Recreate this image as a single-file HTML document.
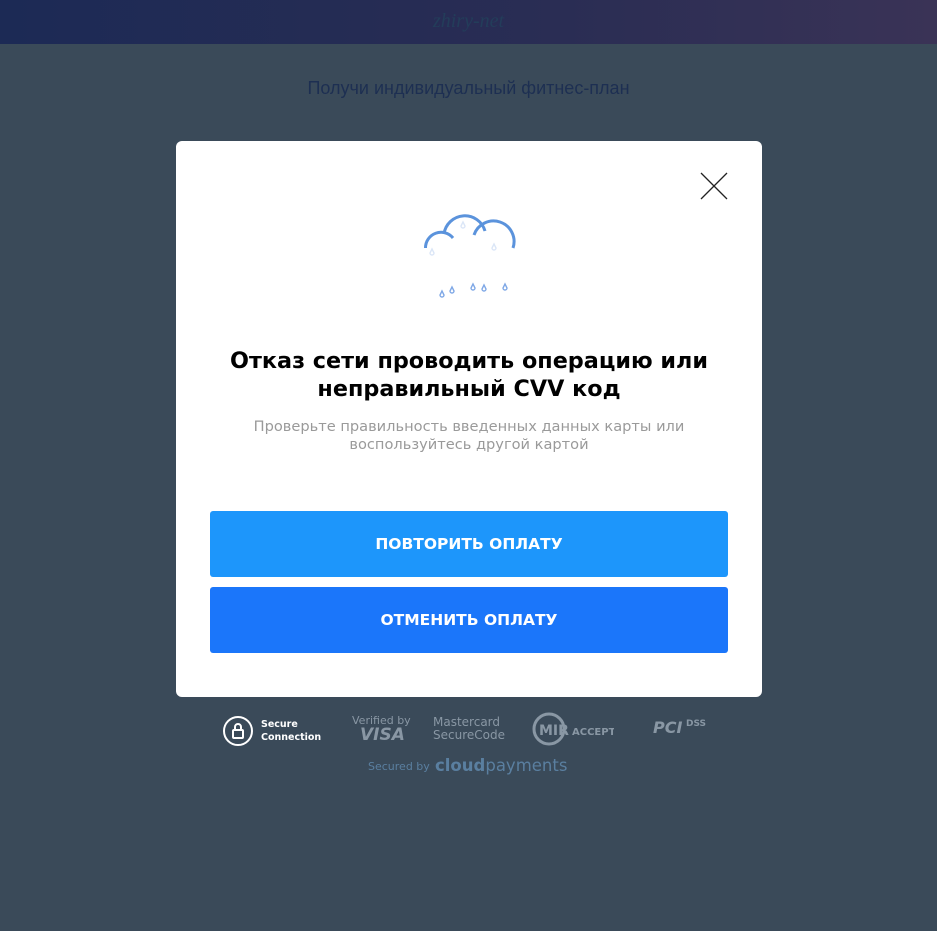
<!DOCTYPE html>
<html><head><meta charset="utf-8"><style>
*{margin:0;padding:0;box-sizing:border-box}
body{width:937px;height:931px;background:#3a4a59;font-family:"Liberation Sans",sans-serif;position:relative;overflow:hidden}
.hdr{position:absolute;left:0;top:0;width:937px;height:44px;background:linear-gradient(90deg,#1c2a55,#2a2d54 60%,#3a3356)}
.logo{position:absolute;left:0;width:937px;top:10px;text-align:center;color:#233d5a;font-family:"Liberation Serif",serif;font-style:italic;font-size:20px}
.sub{position:absolute;top:78px;width:937px;text-align:center;color:#1d2f52;font-size:18px}
.modal{position:absolute;left:176px;top:141px;width:586px;height:556px;background:#fff;border-radius:6px}
.t{position:absolute;top:206px;left:0;width:586px;text-align:center;font-family:"DejaVu Sans",sans-serif;font-weight:600;font-size:22.3px;line-height:28px;color:#000}
.d{position:absolute;top:277px;left:0;width:586px;text-align:center;font-family:"DejaVu Sans",sans-serif;font-size:14.6px;line-height:18px;color:#9a9a9a}
.b{position:absolute;left:34px;width:518px;height:66px;border-radius:3px;color:#fff;font-family:"DejaVu Sans",sans-serif;font-size:15.5px;font-weight:600;text-align:center;line-height:66px}
.foot{position:absolute;color:#8997a4;font-family:"DejaVu Sans",sans-serif}
</style></head><body>
<div class="hdr"><div class="logo">zhiry-net</div></div>
<div class="sub">Получи индивидуальный фитнес-план</div>
<div class="modal">
<svg style="position:absolute;left:524px;top:31px" width="28" height="28"><path d="M1 1L27 27M27 1L1 27" stroke="#222" stroke-width="1.3"/></svg>
</div>
<svg style="position:absolute;left:400px;top:200px" width="140" height="110" viewBox="0 0 140 110">
<g fill="none" stroke="#5b93dc" stroke-width="3">
<path d="M25.5 48A15.5 15.5 0 0 1 53 38"/>
<path d="M44 34A21 21 0 0 1 85 31"/>
<path d="M74 35A20 20 0 0 1 113 48"/>
</g>
<g fill="none" stroke="#7fa8e6" stroke-width="1.4">
<path d="M42 91l-2 4a2 2 0 0 0 4 0z"/><path d="M52 87l-2 4a2 2 0 0 0 4 0z"/><path d="M73 84l-2 4a2 2 0 0 0 4 0z"/><path d="M84 85l-2 4a2 2 0 0 0 4 0z"/><path d="M105 84l-2 4a2 2 0 0 0 4 0z"/></g>
<g fill="none" stroke="#dbe6f7" stroke-width="1.4"><path d="M32 49l-2 4a2 2 0 0 0 4 0z"/><path d="M63 22l-2 4a2 2 0 0 0 4 0z"/><path d="M94 44l-2 4a2 2 0 0 0 4 0z"/></g>
</svg>
<div class="modal" style="background:none">
<div class="t">Отказ сети проводить операцию или<br>неправильный CVV код</div>
<div class="d">Проверьте правильность введенных данных карты или<br>воспользуйтесь другой картой</div>
<div class="b" style="top:370px;background:#1d96fb">ПОВТОРИТЬ ОПЛАТУ</div>
<div class="b" style="top:446px;background:#1b76fa">ОТМЕНИТЬ ОПЛАТУ</div>
</div>
<svg style="position:absolute;left:222px;top:715px" width="32" height="32"><circle cx="16" cy="16" r="14" fill="none" stroke="#fff" stroke-width="2"/><rect x="11" y="15" width="10" height="8" rx="1" fill="none" stroke="#fff" stroke-width="2"/><path d="M13 15v-3a3 3 0 0 1 6 0v3" fill="none" stroke="#fff" stroke-width="2"/></svg>
<div class="foot" style="left:261px;top:718px;font-size:9.5px;line-height:13px;color:#fff;font-weight:bold">Secure<br>Connection</div>
<div class="foot" style="left:352px;top:714px;font-size:11px">Verified by</div>
<div class="foot" style="left:360px;top:725px;font-size:17px;font-weight:bold;font-style:italic">VISA</div>
<div class="foot" style="left:433px;top:716px;font-size:12px;line-height:13px">Mastercard<br>SecureCode</div>
<svg style="position:absolute;left:532px;top:712px" width="82" height="34"><circle cx="17" cy="17" r="15" fill="none" stroke="#8997a4" stroke-width="3"/><text x="7" y="23" font-family="DejaVu Sans" font-weight="bold" font-size="14" fill="#8997a4">MIR</text><text x="40" y="23" font-family="DejaVu Sans" font-weight="bold" font-size="10" fill="#8997a4">ACCEPT</text></svg>
<div class="foot" style="left:653px;top:718px;font-size:16px;font-weight:bold;font-style:italic">PCI</div>
<div class="foot" style="left:686px;top:719px;font-size:9px;font-weight:bold">DSS</div>
<div class="foot" style="left:368px;top:760px;font-size:11px;color:#5a7fa0">Secured by</div>
<div class="foot" style="left:435px;top:756px;font-size:16.5px;color:#5a7fa0"><b>cloud</b>payments</div>
</body></html>
